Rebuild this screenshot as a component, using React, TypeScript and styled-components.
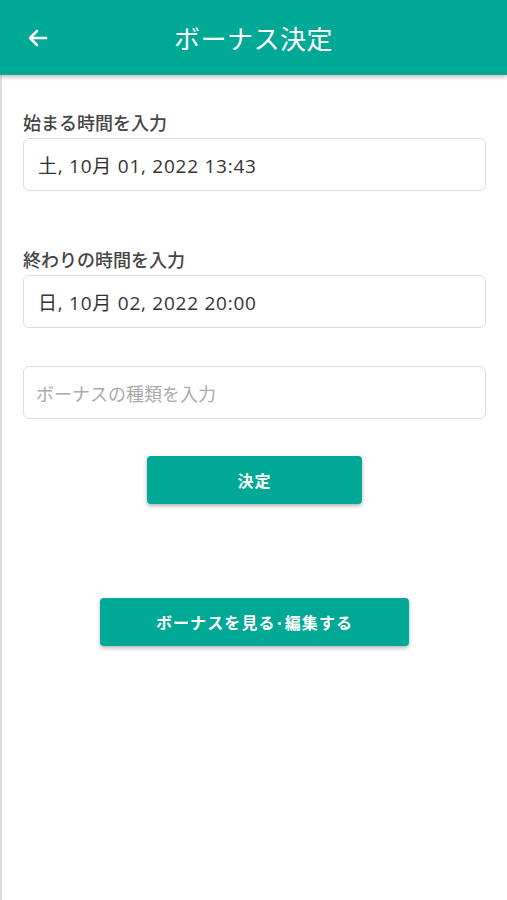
import React from 'react';
import styled, { createGlobalStyle } from 'styled-components';

const GlobalStyle = createGlobalStyle`
  body {
    margin: 0;
    background: #ffffff;
    font-family: Roboto, "Noto Sans CJK JP", sans-serif;
  }
`;

const Screen = styled.div`
  display: flex;
  flex-direction: column;
  min-height: 100vh;
  background: #ffffff;
`;

const Header = styled.header`
  position: relative;
  z-index: 1;
  height: 75px;
  display: flex;
  align-items: center;
  background: #00a896;
  box-shadow: 0 2px 4px rgba(0, 0, 0, 0.25);
`;

const BackButton = styled.button`
  width: 76px;
  height: 75px;
  display: flex;
  align-items: center;
  justify-content: center;
  background: none;
  border: none;
  padding: 0;
  color: #ffffff;
`;

const Title = styled.h1`
  flex: 1;
  margin: 0 76px 0 0;
  text-align: center;
  font-family: "Noto Sans CJK JP", sans-serif;
  font-size: 26px;
  font-weight: 400;
  color: #ffffff;
  letter-spacing: 0.5px;
`;

const Content = styled.main`
  flex: 1;
  display: flex;
  flex-direction: column;
  padding: 35px 21px 0 21px;
  border-left: 2px solid #dcdcdc;
`;

const Field = styled.div<{ $gap: number }>`
  display: flex;
  flex-direction: column;
  margin-bottom: ${(p) => p.$gap}px;
`;

const Label = styled.label`
  font-family: "Noto Sans CJK JP", sans-serif;
  font-size: 18px;
  font-weight: 500;
  line-height: 24px;
  color: #444444;
  margin-bottom: 4px;
`;

const Input = styled.div<{ $placeholder?: boolean }>`
  height: 53px;
  box-sizing: border-box;
  display: flex;
  align-items: center;
  padding: 0 ${(p) => (p.$placeholder ? 12 : 14)}px;
  border: 1px solid #dedede;
  border-radius: 6px;
  font-family: "Open Sans", "Noto Sans CJK JP", sans-serif;
  font-size: ${(p) => (p.$placeholder ? 18 : 19)}px;
  letter-spacing: ${(p) => (p.$placeholder ? 0 : 0.75)}px;
  color: ${(p) => (p.$placeholder ? '#aaaaaa' : '#333333')};
  white-space: pre;
`;

const ActionButton = styled.button<{ $width: number }>`
  align-self: center;
  width: ${(p) => p.$width}px;
  height: 48px;
  border: none;
  border-radius: 4px;
  background: #00a896;
  color: #ffffff;
  font-family: "Noto Sans CJK JP", sans-serif;
  font-size: 16px;
  font-weight: 700;
  letter-spacing: 1.1px;
  box-shadow: 0 2px 4px rgba(0, 0, 0, 0.3);
`;

const Spacer = styled.div<{ $h: number }>`
  height: ${(p) => p.$h}px;
`;

const App: React.FC = () => {
  return (
    <Screen>
      <GlobalStyle />
      <Header>
        <BackButton aria-label="戻る">
          <svg width="24" height="24" viewBox="0 0 24 24" fill="none" stroke="#fff" strokeWidth="2.6" strokeLinecap="round" strokeLinejoin="round">
            <path d="M20 12H4.5" />
            <path d="M11 5l-7 7 7 7" />
          </svg>
        </BackButton>
        <Title>ボーナス決定</Title>
      </Header>
      <Content>
        <Field $gap={56}>
          <Label>始まる時間を入力</Label>
          <Input>土, 10月 01, 2022 13:43</Input>
        </Field>
        <Field $gap={38}>
          <Label>終わりの時間を入力</Label>
          <Input>日, 10月 02, 2022 20:00</Input>
        </Field>
        <Field $gap={37}>
          <Input $placeholder>ボーナスの種類を入力</Input>
        </Field>
        <ActionButton $width={215}>決定</ActionButton>
        <Spacer $h={94} />
        <ActionButton $width={309}>ボーナスを見る･編集する</ActionButton>
      </Content>
    </Screen>
  );
};

export default App;
